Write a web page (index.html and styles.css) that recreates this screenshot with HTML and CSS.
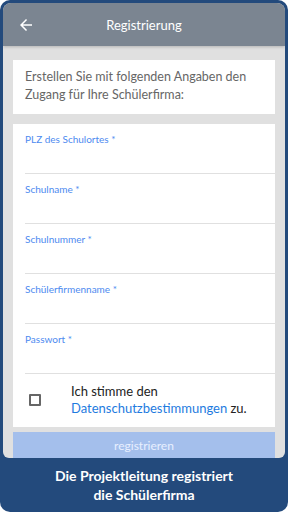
FILE: index.html
```html
<!DOCTYPE html>
<html lang="de">
<head>
<meta charset="UTF-8" />
<meta name="viewport" content="width=device-width, initial-scale=1" />
<title>Registrierung</title>
<link rel="stylesheet" href="styles.css">
</head>
<body>
  <div class="frame">
    <!-- Phone screen -->
    <div class="screen">
      <header class="appbar">
        <svg class="back" viewBox="0 0 24 24" width="18" height="18">
          <path d="M20 11H7.83l5.59-5.59L12 4l-8 8 8 8 1.41-1.41L7.83 13H20v-2z" fill="#fff"/>
        </svg>
        <h1 class="title">Registrierung</h1>
      </header>

      <div class="content">
        <div class="card intro">
          Erstellen Sie mit folgenden Angaben den Zugang für Ihre Schülerfirma:
        </div>

        <div class="card form">
          <div class="field"><label>PLZ des Schulortes *</label></div>
          <div class="field"><label>Schulname *</label></div>
          <div class="field"><label>Schulnummer *</label></div>
          <div class="field"><label>Schülerfirmenname *</label></div>
          <div class="field"><label>Passwort *</label></div>
          <div class="agree">
            <span class="checkbox"></span>
            <p>Ich stimme den<br><a href="#">Datenschutzbestimmungen</a> zu.</p>
          </div>
        </div>

        <button class="submit" disabled>registrieren</button>
      </div>
    </div>

    <!-- Caption below the phone -->
    <p class="caption">Die Projektleitung registriert<br>die Schülerfirma</p>
  </div>
</body>
</html>
```

FILE: styles.css
```css
* {
  box-sizing: border-box;
}
body {
  margin: 0;
  background: #fff;
  font-family: Lato, "Noto Sans", sans-serif;
}
.frame {
  width: 288px;
  height: 512px;
  background: #234a7c;
  border-radius: 10px;
  padding: 3px 3px 0;
  overflow: hidden;
}
.screen {
  height: 455px;
  background: #e0e0e0;
  border-radius: 8px 8px 6px 6px;
  overflow: hidden;
}

/* Top bar */
.appbar {
  height: 43px;
  background: #7b8591;
  display: flex;
  align-items: center;
  position: relative;
  box-shadow: 0 1px 3px rgba(0, 0, 0, 0.2);
}
.back {
  margin-left: 14px;
}
.title {
  position: absolute;
  left: 0;
  right: 0;
  margin: 0;
  text-align: center;
  font-size: 13px;
  font-weight: 400;
  color: #fff;
  pointer-events: none;
}

.content {
  padding: 14px 10px 0;
}
.card {
  background: #fff;
}
.intro {
  padding: 8px 12px 0;
  height: 54px;
  font-size: 12.5px;
  line-height: 18px;
  color: #666;
}
.form {
  margin-top: 10px;
  height: 303px;
}
.field {
  height: 50px;
  margin-left: 12px;
  padding-top: 9px;
  border-bottom: 1px solid #e0e0e0;
}
.field label {
  display: block;
  font-size: 10px;
  line-height: 12px;
  color: #4d8af0;
}
.agree {
  display: flex;
  align-items: center;
  height: 52px;
  padding-left: 16px;
}
.checkbox {
  width: 12px;
  height: 12px;
  border: 2px solid #666;
  border-radius: 1px;
  flex: none;
}
.agree p {
  margin: 0 0 0 30px;
  font-size: 13px;
  line-height: 17px;
  color: #222;
}
.agree a {
  color: #1e7be0;
  text-decoration: none;
}
.submit {
  display: block;
  width: 100%;
  height: 30px;
  margin-top: 5px;
  border: none;
  background: #a4bfec;
  color: #e8efff;
  font-family: inherit;
  font-size: 12px;
  padding: 0 0 4px;
}

.caption {
  margin: 0;
  padding-top: 8px;
  text-align: center;
  color: #fff;
  font-weight: 700;
  font-size: 14px;
  line-height: 19px;
}
```
